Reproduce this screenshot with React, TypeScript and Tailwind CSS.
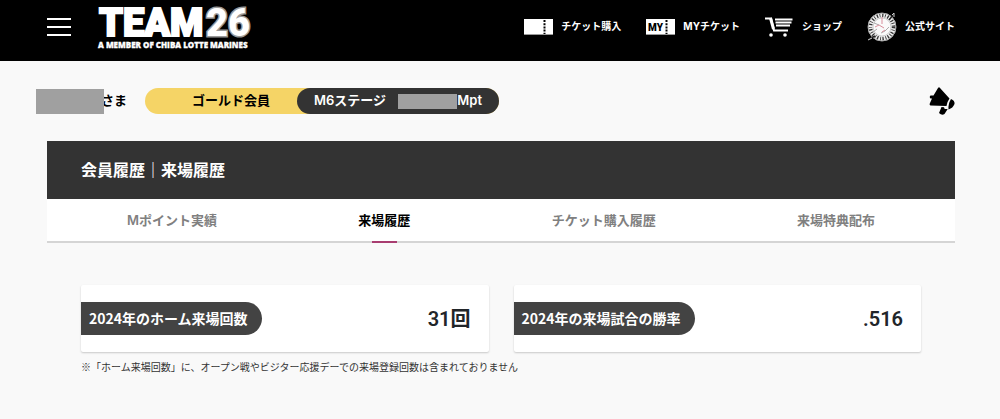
import React from "react";

function TicketIcon({ label }: { label?: string }) {
  return (
    <svg width="29" height="16" viewBox="0 0 29 16" aria-hidden="true">
      <rect width="29" height="16" fill="#fff" />
      <rect y="15" width="29" height="1" fill="#999" />
      <path d="M20.5 1v14" stroke="#000" strokeWidth="2" strokeDasharray="2 1.2" />
      {label && (
        <text x="2" y="12" fontSize="10" fontWeight="900" fill="#000" fontFamily="Roboto, sans-serif">
          {label}
        </text>
      )}
    </svg>
  );
}

function CartIcon() {
  return (
    <svg width="29" height="20" viewBox="0 0 29 20" aria-hidden="true" fill="none" stroke="#fff">
      <path d="M0 1.5h6l3 12h14" strokeWidth="2" />
      <path d="M10 2.500h17.500M10.500 5.500h16M11 8.500h14" strokeWidth="1.800" />
      <path d="M5.500 1l3 11" strokeWidth="3" />
      <circle cx="6" cy="18" r="1.800" fill="#fff" stroke="none" />
      <circle cx="20" cy="18" r="1.800" fill="#fff" stroke="none" />
    </svg>
  );
}

function EmblemIcon() {
  return (
    <svg width="30" height="30" viewBox="0 0 30 30" aria-hidden="true" fill="none">
      <circle cx="15" cy="15" r="14" fill="#eee" stroke="#aaa" />
      <circle cx="15" cy="15" r="11.500" stroke="#333" strokeWidth="3.500" strokeDasharray="1.300 1.500 .8 1.800" />
      <circle cx="15" cy="15" r="9" fill="#fafafa" stroke="#bbb" strokeWidth=".7" />
      <path d="M2 27l6-3M22 8l5-6" stroke="#222" strokeWidth="1.500" />
      <path d="M1 28l4-2M25 3l2-2v4" stroke="#ccc" />
      <path d="M7 11l5 2M10 17l-4 3M14 21l4-2 4-4" stroke="#aaa" />
      <path d="M15 5v7M8 15l4-2 5 3M15 20l3-2" stroke="#d98f9c" />
    </svg>
  );
}

function MegaphoneIcon() {
  return (
    <svg width="26" height="28" viewBox="0 0 26 28" aria-hidden="true" fill="#000">
      <path d="M9 1Q10 -.5 11 1L20.500 11.500Q18.500 14 17.500 19L1.500 18.500Q0 18 1 16L3 11.500H1.500Q0 10 1.500 8.500H4.500Z" />
      <path d="M22 12Q26 13.500 25.500 17 24 21 19.500 22.500 19 17 22 12Z" />
      <path d="M12.500 20l2.500.3.7 1.700h3L15.500 27Q13 29 10 26Z" />
    </svg>
  );
}

const links = [
  { label: "チケット購入", icon: <TicketIcon /> },
  { label: "MYチケット", icon: <TicketIcon label="MY" /> },
  { label: "ショップ", icon: <CartIcon /> },
  { label: "公式サイト", icon: <EmblemIcon /> },
];

const tabs = ["Mポイント実績", "来場履歴", "チケット購入履歴", "来場特典配布"];

function StatCard({ label, value }: { label: string; value: string }) {
  return (
    <div className="flex h-[67px] flex-1 items-center justify-between rounded-xs bg-white pr-[18px] shadow-[0_1px_2px_rgba(0,0,0,0.2)]">
      <dt className="flex h-[33px] items-center rounded-r-full bg-[#434343] pr-[14px] pl-2 font-['Noto_Sans_CJK_JP',sans-serif] text-[14px] font-bold text-white">
        {label}
      </dt>
      <dd className="font-['Roboto','Noto_Sans_CJK_JP',sans-serif] text-[20px] font-semibold text-[#212529]">{value}</dd>
    </div>
  );
}

export default function App() {
  return (
    <div className="min-h-screen bg-[#f9f9f9] font-['Inter','Noto_Sans_CJK_JP',sans-serif] text-black">
      <header className="flex h-[61px] items-center justify-between bg-black pr-[45px] pl-[47px] text-white">
        <div className="mb-2 flex items-center gap-[27px]">
          <button type="button" aria-label="メニュー" className="flex w-6 flex-col gap-[6px]">
            <span className="h-[2px] w-full bg-white" />
            <span className="h-[2px] w-full bg-white" />
            <span className="h-[2px] w-full bg-white" />
          </button>
          <a href="#top" aria-label="TEAM26 A MEMBER OF CHIBA LOTTE MARINES">
            <svg className="overflow-visible" width="156" height="46" viewBox="0 0 156 46" fontFamily="Roboto, sans-serif" fontWeight="900" fill="#fff">
              <text x="1" y="32" fontSize="38" stroke="#fff" strokeWidth="2">TEAM</text>
              <text x="108" y="32" fontSize="38" stroke="#999" strokeWidth="3" paintOrder="stroke">26</text>
              <text x="0" y="44" fontSize="8" fontWeight="800" fontFamily="'Open Sans', sans-serif" stroke="#fff" strokeWidth=".3">A MEMBER OF CHIBA LOTTE MARINES</text>
            </svg>
          </a>
        </div>
        <nav className="mb-2 flex items-center gap-[25px]">
          {links.map((link) => (
            <a key={link.label} href="#link" className="flex items-center gap-2 text-[10px] font-bold">
              {link.icon}
              {link.label}
            </a>
          ))}
        </nav>
      </header>

      <main className="pr-[45px] pl-[47px]">
        <div className="flex h-20 items-center justify-between">
          <div className="-ml-[11px] flex items-center text-[13px] font-semibold">
            <span className="z-10 h-[25px] w-[68px] bg-[#a0a0a0]" />
            <span className="-ml-[3px]">さま</span>
            <div className="ml-[18px] flex h-[26px] rounded-full bg-[#f5d466]">
              <span className="flex w-[152px] items-center justify-center pl-5">ゴールド会員</span>
              <span className="flex w-[202px] items-center justify-between rounded-full bg-[#333] px-[17px] text-white">
                M6ステージ
                <span className="flex items-center">
                  <span className="h-[15px] w-[59px] bg-[#a0a0a0]" />
                  Mpt
                </span>
              </span>
            </div>
          </div>
          <button type="button" aria-label="お知らせ">
            <MegaphoneIcon />
          </button>
        </div>

        <h1 className="flex h-[58px] items-center bg-[#333] px-[34px] text-base font-bold text-white">
          会員履歴｜来場履歴
        </h1>
        <nav className="flex h-11 justify-between border-b-2 border-[#d5d5d5] bg-white px-20 text-[13px] font-semibold text-[#808080]">
          {tabs.map((tab) =>
            tab === "来場履歴" ? (
              <a key={tab} href="#tab" aria-current="page" className="-mb-[2px] flex flex-col items-center text-black">
                <span className="flex flex-1 items-center pt-[2px]">{tab}</span>
                <span className="h-[2px] w-[25px] bg-[#a83d70]" />
              </a>
            ) : (
              <a key={tab} href="#tab" className="flex items-center pt-[2px]">
                {tab}
              </a>
            ),
          )}
        </nav>

        <section className="px-[34px] pt-[42px]">
          <dl className="flex gap-[25px]">
            <StatCard label="2024年のホーム来場回数" value="31回" />
            <StatCard label="2024年の来場試合の勝率" value=".516" />
          </dl>
          <p className="mt-[7px] font-['Noto_Sans_CJK_JP',sans-serif] text-[10px] text-[#333]">
            ※「ホーム来場回数」に、オープン戦やビジター応援デーでの来場登録回数は含まれておりません
          </p>
        </section>
      </main>
    </div>
  );
}
